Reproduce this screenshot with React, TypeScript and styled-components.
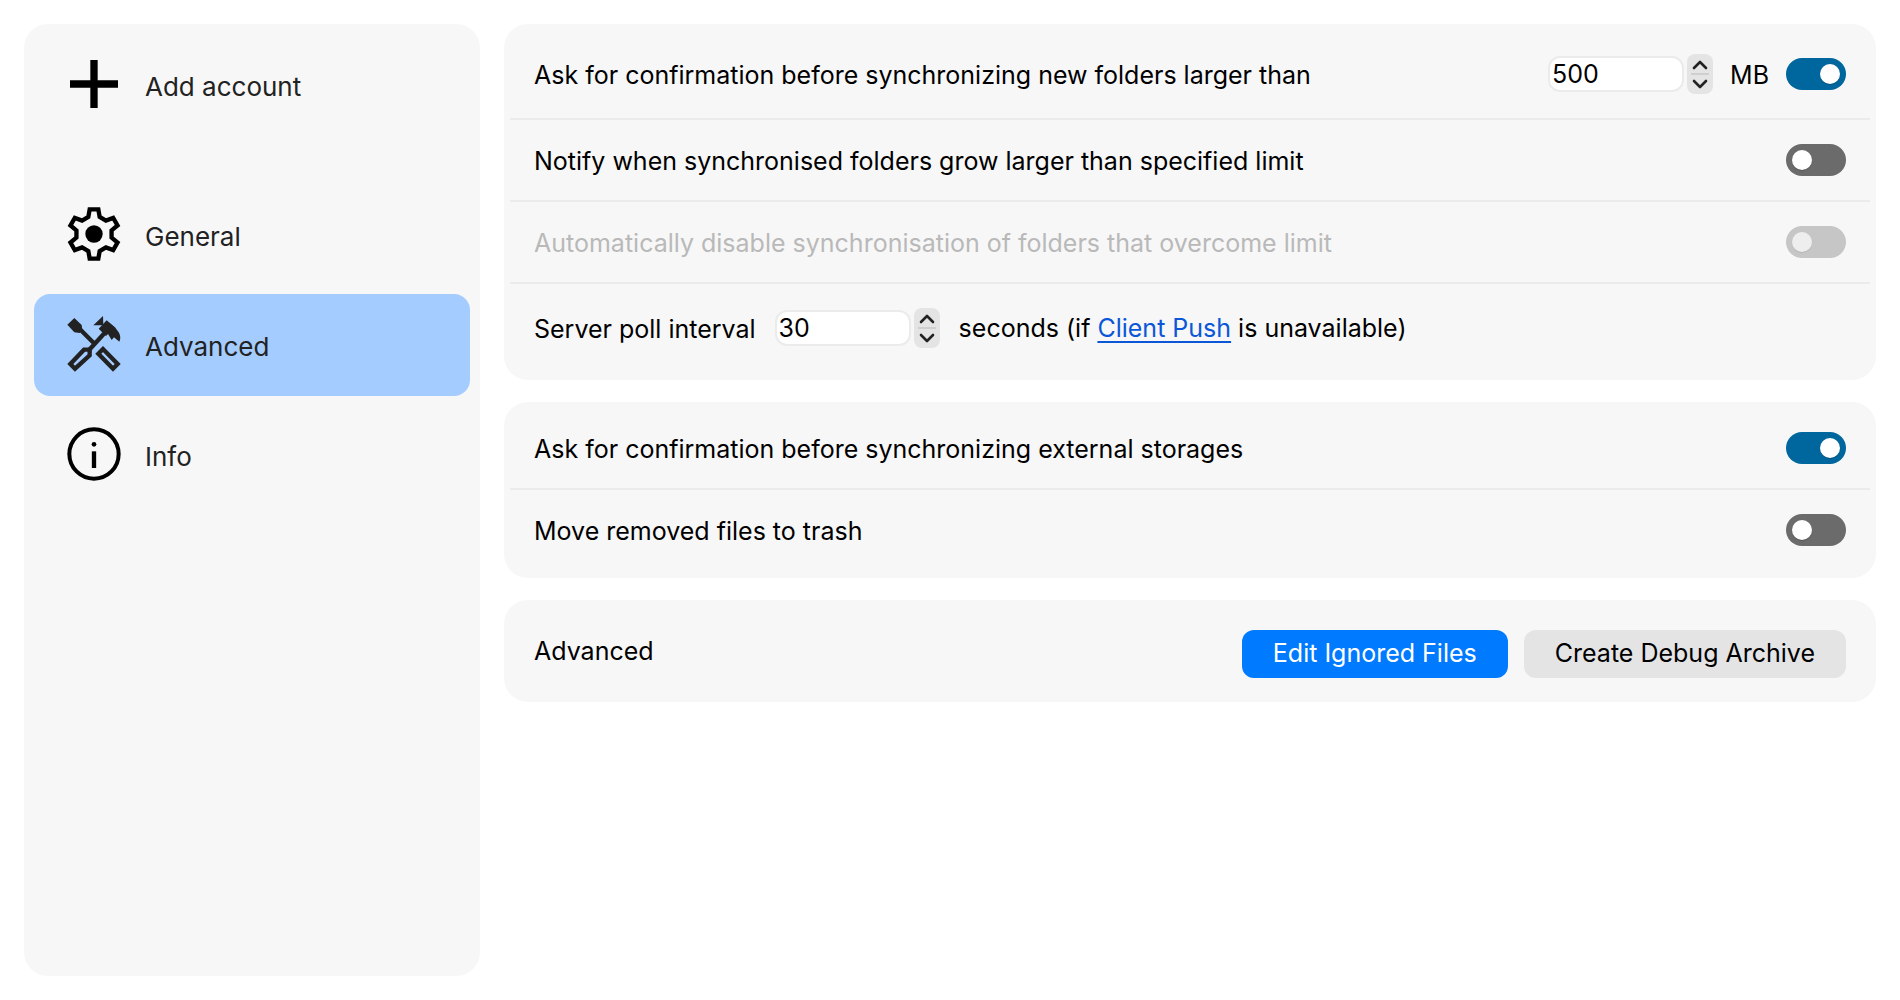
import React, { useId, useState } from "react";
import styled, { createGlobalStyle } from "styled-components";

const GlobalStyle = createGlobalStyle`
  *, *::before { box-sizing: border-box; }
  body {
    margin: 0;
    background: #ffffff;
    color: #000000;
    font: 25px/32px Inter, "Liberation Sans", sans-serif;
  }
  button, input { font: inherit; color: inherit; }
`;

const Window = styled.div`
  display: flex;
  gap: 24px;
  min-height: 100vh;
  padding: 24px;
`;

const Sidebar = styled.nav`
  display: flex;
  flex-direction: column;
  flex: 0 0 456px;
  gap: 8px;
  padding: 10px;
  border-radius: 24px;
  background: #f7f7f7;
`;

const NavButton = styled.button<{ $selected?: boolean; $separated?: boolean }>`
  display: flex;
  align-items: center;
  gap: 24px;
  height: 102px;
  margin: 0 0 ${(p) => (p.$separated ? "40px" : "0")};
  padding: 0 33px 2px;
  border: 0;
  border-radius: 16px;
  background: ${(p) => (p.$selected ? "#a5ccff" : "transparent")};
  color: #222222;
  font-size: 26px;
  text-align: left;
`;

const NavText = styled.span`
  padding-top: 5px;
`;

const NavIcon = styled.svg`
  flex: none;
  width: 54px;
  height: 54px;
  overflow: visible;
`;

const Content = styled.main`
  display: flex;
  flex-direction: column;
  flex: 1;
  gap: 22px;
  min-width: 0;
`;

const Card = styled.section`
  padding: 6px 6px 8px;
  border-radius: 24px;
  background: #f7f7f7;
`;

const Row = styled.div<{ $tall?: boolean; $muted?: boolean; $gap?: number }>`
  display: flex;
  box-sizing: content-box;
  align-items: center;
  gap: ${(p) => p.$gap ?? 17}px;
  min-height: ${(p) => (p.$tall ? "88px" : "80px")};
  padding: 0 24px;
  color: ${(p) => (p.$muted ? "#b9b9b9" : "#000000")};

  & + & { border-top: 2px solid #ebebeb; }
`;

const RowLabel = styled.label<{ $grow?: boolean }>`
  flex: ${(p) => (p.$grow ? "1" : "none")};
  padding-top: 2px;
`;

const RowTitle = styled.h2`
  flex: 1;
  margin: 0;
  padding-top: 2px;
  font-size: 25px;
  font-weight: 400;
`;

const Switch = styled.input`
  appearance: none;
  display: flex;
  flex: none;
  width: 60px;
  height: 32px;
  margin: 0;
  padding: 6px;
  border-radius: 16px;
  background: #6b6b6b;

  &::before {
    content: "";
    width: 20px;
    height: 20px;
    border-radius: 50%;
    background: #ffffff;
    box-shadow: 0 1px 1px rgba(0, 0, 0, 0.2);
  }
  &:checked { justify-content: flex-end; background: #00679e; }
  &:disabled { background: #c6c6c6; }
  &:disabled::before { background: #eeeeee; box-shadow: 0 1px 1px rgba(0, 0, 0, 0.08); }
`;

const Stepper = styled.div`
  display: flex;
  align-items: center;
  gap: 3px;
`;

const NumberBox = styled.input`
  width: 136px;
  height: 36px;
  padding: 0 2px;
  border: 2px solid #ebebeb;
  border-radius: 12px;
  background: #ffffff;
`;

const Arrows = styled.div`
  display: flex;
  flex-direction: column;
  width: 26px;
  height: 40px;
  padding: 2px 4px;
  border-radius: 8px;
  background: #e4e4e4;
`;

const ArrowButton = styled.button`
  display: flex;
  flex: 1;
  align-items: center;
  justify-content: center;
  padding: 0;
  border: 0;
  background: transparent;
  color: #222222;

  & + & { border-top: 2px solid #cfcfcf; }
`;

const Link = styled.a`
  color: #0b57d8;
  text-decoration: underline 2px;
  text-decoration-skip-ink: none;
  text-underline-offset: 4px;
`;

const Actions = styled.div`
  display: flex;
  gap: 16px;
  padding-top: 8px;
`;

const ActionButton = styled.button<{ $primary?: boolean }>`
  height: 48px;
  padding: 0 31px 2px;
  border: 0;
  border-radius: 12px;
  background: ${(p) => (p.$primary ? "#007aff" : "#e4e4e4")};
  color: ${(p) => (p.$primary ? "#ffffff" : "#000000")};
`;

const toothPoints = [[-17, -51], [-13, -74], [13, -74], [17, -51]];
const gearPoints = [0, 60, 120, 180, 240, 300]
  .flatMap((deg) => {
    const a = (deg * Math.PI) / 180;
    return toothPoints.map(([x, y]) =>
      `${(x * Math.cos(a) - y * Math.sin(a)).toFixed(1)},${(x * Math.sin(a) + y * Math.cos(a)).toFixed(1)}`,
    );
  })
  .join(" ");

const PlusIcon = () => (
  <NavIcon viewBox="-81 -81 162 162" aria-hidden="true">
    <path d="M-72 0H72M0-72V72" stroke="#000" strokeWidth="22" />
  </NavIcon>
);

const GearIcon = () => (
  <NavIcon viewBox="-81 -81 162 162" aria-hidden="true">
    <polygon points={gearPoints} fill="none" stroke="#000" strokeWidth="13" />
    <circle r="26" fill="#000" />
  </NavIcon>
);

const ToolsIcon = () => (
  <NavIcon viewBox="-81 -81 162 162" aria-hidden="true">
    <g fill="none" stroke="#222" strokeWidth="13">
      <path d="M-42-44L0-2M38-40L-14 17" />
      <path d="M-30 17H-13V34L-57 74L-71 60Z" />
      <path d="M27 15L13 29L57 74L71 60Z" />
    </g>
    <g fill="#222">
      <path d="M-80-58L-59-78L-37-57L-35-41L-43-33L-59-35Z" />
      <path d="M27-84L-2-56H28Z" />
      <path d="M38-71L14-46L36-24L42-30L53-12L60-20L76-7C80-16 80-24 75-34L63-50Z" />
    </g>
  </NavIcon>
);

const InfoIcon = () => (
  <NavIcon viewBox="-81 -81 162 162" aria-hidden="true">
    <circle r="74" fill="none" stroke="#000" strokeWidth="12" />
    <circle cy="-29" r="7" fill="#000" />
    <path d="M0-8V42" stroke="#000" strokeWidth="13" />
  </NavIcon>
);

const Chevron = ({ up }: { up?: boolean }) => (
  <svg width="16" height="10" viewBox="0 0 16 10" fill="none" stroke="currentColor" strokeWidth="2.6" strokeLinecap="round" strokeLinejoin="round" aria-hidden="true">
    <path d={up ? "M2 8L8 2L14 8" : "M2 2L8 8L14 2"} />
  </svg>
);

type NumberStepperProps = { id: string; initial: number; step: number };

const NumberStepper = ({ id, initial, step }: NumberStepperProps) => {
  const [value, setValue] = useState(initial);
  return (
    <Stepper>
      <NumberBox
        id={id}
        inputMode="numeric"
        value={value}
        onChange={(e) => setValue(Number(e.target.value) || 0)}
      />
      <Arrows>
        <ArrowButton type="button" aria-label="Increase" onClick={() => setValue(value + step)}>
          <Chevron up />
        </ArrowButton>
        <ArrowButton type="button" aria-label="Decrease" onClick={() => setValue(Math.max(0, value - step))}>
          <Chevron />
        </ArrowButton>
      </Arrows>
    </Stepper>
  );
};

type ToggleRowProps = {
  label: string;
  on?: boolean;
  disabled?: boolean;
  tall?: boolean;
  children?: React.ReactNode;
};

const ToggleRow = ({ label, on, disabled, tall, children }: ToggleRowProps) => {
  const id = useId();
  return (
    <Row $tall={tall} $muted={disabled}>
      <RowLabel $grow htmlFor={id}>{label}</RowLabel>
      {children}
      <Switch id={id} type="checkbox" role="switch" defaultChecked={on} disabled={disabled} />
    </Row>
  );
};

export default function App() {
  return (
    <>
      <GlobalStyle />
      <Window>
        <Sidebar>
          <NavButton type="button" $separated><PlusIcon /><NavText>Add account</NavText></NavButton>
          <NavButton type="button"><GearIcon /><NavText>General</NavText></NavButton>
          <NavButton type="button" $selected aria-current="page"><ToolsIcon /><NavText>Advanced</NavText></NavButton>
          <NavButton type="button"><InfoIcon /><NavText>Info</NavText></NavButton>
        </Sidebar>
        <Content>
          <Card>
            <ToggleRow tall on label="Ask for confirmation before synchronizing new folders larger than">
              <NumberStepper id="folder-limit" initial={500} step={1} />
              <RowLabel htmlFor="folder-limit">MB</RowLabel>
            </ToggleRow>
            <ToggleRow label="Notify when synchronised folders grow larger than specified limit" />
            <ToggleRow disabled label="Automatically disable synchronisation of folders that overcome limit" />
            <Row $tall $gap={19}>
              <RowLabel htmlFor="poll-interval">Server poll interval</RowLabel>
              <NumberStepper id="poll-interval" initial={30} step={1} />
              <span>seconds (if <Link href="#client-push">Client Push</Link> is unavailable)</span>
            </Row>
          </Card>
          <Card>
            <ToggleRow on label="Ask for confirmation before synchronizing external storages" />
            <ToggleRow label="Move removed files to trash" />
          </Card>
          <Card>
            <Row $tall>
              <RowTitle>Advanced</RowTitle>
              <Actions>
                <ActionButton type="button" $primary>Edit Ignored Files</ActionButton>
                <ActionButton type="button">Create Debug Archive</ActionButton>
              </Actions>
            </Row>
          </Card>
        </Content>
      </Window>
    </>
  );
}
